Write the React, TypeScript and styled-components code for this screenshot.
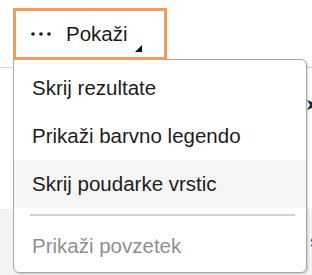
import React from "react";
import styled, { createGlobalStyle } from "styled-components";

const Global = createGlobalStyle`
  html, body { margin: 0; padding: 0; background: #ffffff; }
  body { font-family: "Liberation Sans", Arial, sans-serif; }
`;

const Page = styled.div`
  width: 312px;
  height: 275px;
  overflow: hidden;
  display: flex;
  flex-direction: column;
  background: #ffffff;
`;

const Toolbar = styled.div`
  box-sizing: border-box;
  height: 68px;
  padding: 8px 0 0 13px;
  border-bottom: 1px solid #d6d6d6;
  display: flex;
  align-items: flex-start;
`;

const Anchor = styled.div`
  position: relative;
`;

const ShowButton = styled.button`
  position: relative;
  z-index: 2;
  box-sizing: border-box;
  width: 154px;
  height: 52px;
  margin: 0;
  padding: 0 0 0 15px;
  border: 3.5px solid #f29c5c;
  background: #ffffff;
  display: flex;
  align-items: center;
  gap: 15px;
  font-family: "Liberation Sans", Arial, sans-serif;
  font-size: 20.5px;
  color: #1a1a1a;
  cursor: pointer;
`;

const Caret = styled.svg`
  position: absolute;
  right: 22px;
  bottom: 5px;
`;

const Menu = styled.div`
  position: absolute;
  z-index: 1;
  top: calc(100% - 1px);
  left: 0;
  box-sizing: border-box;
  width: 294px;
  height: 214px;
  padding: 4px 0 0 0;
  background: #ffffff;
  border: 1.5px solid #a9a9a9;
  border-radius: 0 6px 6px 6px;
  box-shadow: 1px 1px 2px rgba(0, 0, 0, 0.18);
  display: flex;
  flex-direction: column;
`;

const Item = styled.div<{ $active?: boolean; $disabled?: boolean }>`
  height: 48px;
  flex: none;
  display: flex;
  align-items: center;
  padding-left: 18px;
  font-size: 20.5px;
  color: ${(p) => (p.$disabled ? "#8f8f8f" : "#1c1c1c")};
  background: ${(p) => (p.$active ? "#f5f5f5" : "transparent")};
`;

const Separator = styled.div`
  height: 2px;
  flex: none;
  margin: 6px 11px 6px 16px;
  background: #d2d2d2;
`;

const Content = styled.div`
  flex: 1;
  display: flex;
  flex-direction: column;
`;

const ContentRow = styled.div<{ $shade?: boolean; $h: number }>`
  height: ${(p) => p.$h}px;
  flex: none;
  display: flex;
  justify-content: flex-end;
  align-items: flex-start;
  background: ${(p) => (p.$shade ? "#f3f3f3" : "transparent")};
`;

const ArrowGlyph = styled.svg`
  margin-top: 32px;
  margin-right: -7px;
`;

const LinkText = styled.span`
  margin-top: 24px;
  margin-right: -6px;
  font-size: 16px;
  color: #2f5bb7;
`;

const Dots = () => (
  <svg width="20" height="4" viewBox="0 0 20 4">
    <circle cx="2" cy="2" r="1.8" fill="#1a1a1a" />
    <circle cx="10" cy="2" r="1.8" fill="#1a1a1a" />
    <circle cx="18" cy="2" r="1.8" fill="#1a1a1a" />
  </svg>
);

export default function App() {
  return (
    <>
      <Global />
      <Page>
        <Toolbar>
          <Anchor>
            <ShowButton>
              <Dots />
              <span>Pokaži</span>
              <Caret width="7" height="7" viewBox="0 0 7 7">
                <polygon points="7,0 7,7 0,7" fill="#111" />
              </Caret>
            </ShowButton>
            <Menu>
              <Item>Skrij rezultate</Item>
              <Item>Prikaži barvno legendo</Item>
              <Item $active>Skrij poudarke vrstic</Item>
              <Separator />
              <Item $disabled>Prikaži povzetek</Item>
            </Menu>
          </Anchor>
        </Toolbar>
        <Content>
          <ContentRow $h={141}>
            <ArrowGlyph width="12" height="10" viewBox="0 0 12 10">
              <polygon points="0,0 12,5 0,10 3,5" fill="#1d2b3a" />
            </ArrowGlyph>
          </ContentRow>
          <ContentRow $h={66} $shade>
            <LinkText>s</LinkText>
          </ContentRow>
        </Content>
      </Page>
    </>
  );
}
